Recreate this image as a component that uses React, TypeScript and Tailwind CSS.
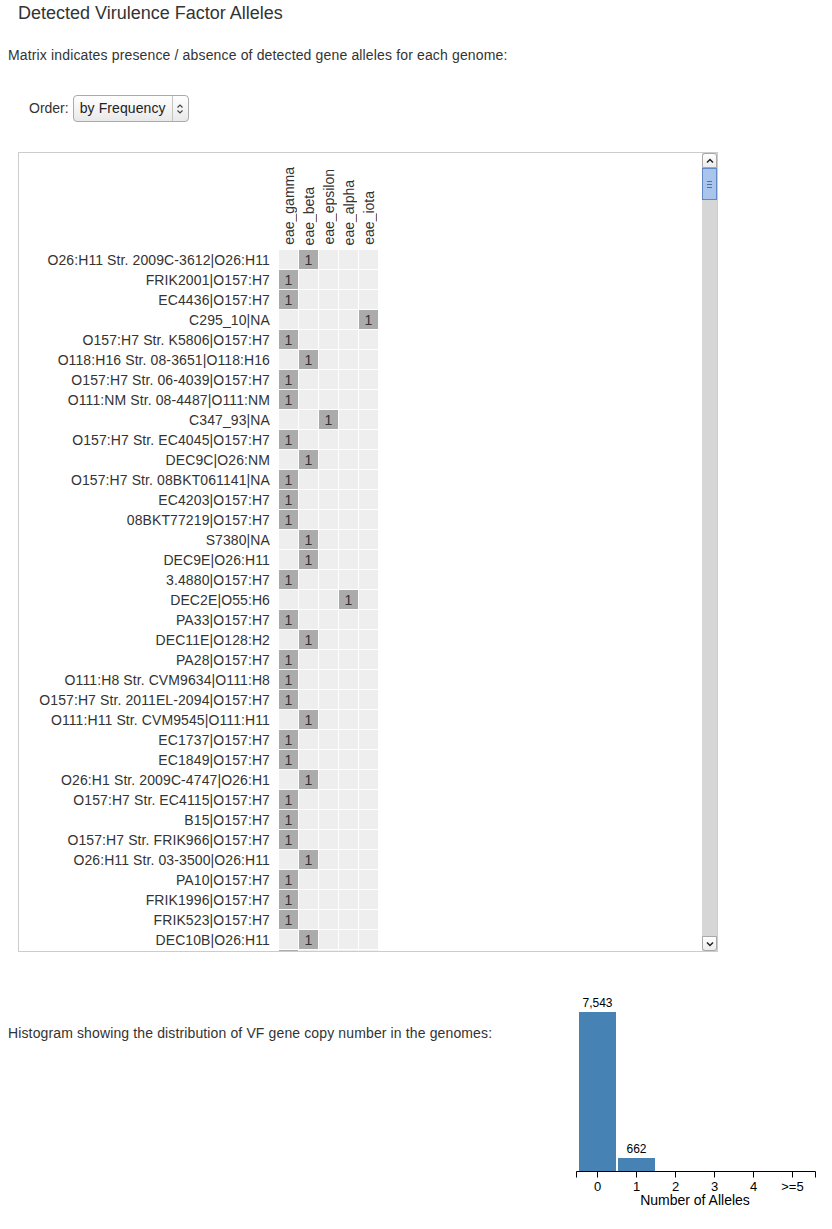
import React from 'react';

const GENES = ['eae_gamma', 'eae_beta', 'eae_epsilon', 'eae_alpha', 'eae_iota'];

// [genome label, index of detected allele]
const ROWS: [string, number][] = [
  ['O26:H11 Str. 2009C-3612|O26:H11', 1],
  ['FRIK2001|O157:H7', 0],
  ['EC4436|O157:H7', 0],
  ['C295_10|NA', 4],
  ['O157:H7 Str. K5806|O157:H7', 0],
  ['O118:H16 Str. 08-3651|O118:H16', 1],
  ['O157:H7 Str. 06-4039|O157:H7', 0],
  ['O111:NM Str. 08-4487|O111:NM', 0],
  ['C347_93|NA', 2],
  ['O157:H7 Str. EC4045|O157:H7', 0],
  ['DEC9C|O26:NM', 1],
  ['O157:H7 Str. 08BKT061141|NA', 0],
  ['EC4203|O157:H7', 0],
  ['08BKT77219|O157:H7', 0],
  ['S7380|NA', 1],
  ['DEC9E|O26:H11', 1],
  ['3.4880|O157:H7', 0],
  ['DEC2E|O55:H6', 3],
  ['PA33|O157:H7', 0],
  ['DEC11E|O128:H2', 1],
  ['PA28|O157:H7', 0],
  ['O111:H8 Str. CVM9634|O111:H8', 0],
  ['O157:H7 Str. 2011EL-2094|O157:H7', 0],
  ['O111:H11 Str. CVM9545|O111:H11', 1],
  ['EC1737|O157:H7', 0],
  ['EC1849|O157:H7', 0],
  ['O26:H1 Str. 2009C-4747|O26:H1', 1],
  ['O157:H7 Str. EC4115|O157:H7', 0],
  ['B15|O157:H7', 0],
  ['O157:H7 Str. FRIK966|O157:H7', 0],
  ['O26:H11 Str. 03-3500|O26:H11', 1],
  ['PA10|O157:H7', 0],
  ['FRIK1996|O157:H7', 0],
  ['FRIK523|O157:H7', 0],
  ['DEC10B|O26:H11', 1],
];

function OrderSelect() {
  return (
    <div className="flex items-center gap-[4px] pl-[29px]">
      <span>Order:</span>
      <div className="flex h-[27px] w-[116px] items-center rounded-[4px] border border-[#aaaaaa] bg-gradient-to-b from-white to-[#e9e9e9]">
        <span className="flex-1 pl-[6px] tracking-[0.1px] text-[#222]">by Frequency</span>
        <div className="flex h-full w-[16px] items-center justify-center border-l border-[#c4c4c4]">
          <svg width="8" height="12" viewBox="0 0 8 12" fill="none" stroke="#444" strokeWidth="1.2">
            <path d="M1.5 4.5 L4 2 L6.5 4.5" />
            <path d="M1.5 7.5 L4 10 L6.5 7.5" />
          </svg>
        </div>
      </div>
    </div>
  );
}

function Scrollbar() {
  return (
    <div className="flex w-[15px] shrink-0 flex-col bg-[#d6d6d6]">
      <div className="flex h-[15px] items-center justify-center rounded-t-[3px] border border-[#a8a8a8] bg-gradient-to-b from-white to-[#ececec]">
        <svg width="8" height="6" viewBox="0 0 8 6" fill="none" stroke="#222" strokeWidth="1.5">
          <path d="M1 4.5 L4 1.5 L7 4.5" />
        </svg>
      </div>
      <div className="flex h-[32px] flex-col items-center justify-center gap-[2px] border border-[#6188c4] bg-[#a9c5ec]">
        <div className="h-px w-[5px] bg-[#4f72a8]" />
        <div className="h-px w-[5px] bg-[#4f72a8]" />
        <div className="h-px w-[5px] bg-[#4f72a8]" />
      </div>
      <div className="flex-1" />
      <div className="flex h-[15px] items-center justify-center rounded-b-[3px] border border-[#a8a8a8] bg-gradient-to-b from-white to-[#ececec]">
        <svg width="8" height="6" viewBox="0 0 8 6" fill="none" stroke="#222" strokeWidth="1.5">
          <path d="M1 1.5 L4 4.5 L7 1.5" />
        </svg>
      </div>
    </div>
  );
}

function Matrix() {
  return (
    <div className="ml-[18px] flex h-[800px] w-[700px] border border-[#cccccc] bg-white">
      <div className="flex-1 overflow-hidden">
        <div className="flex h-[97px]">
          <div className="w-[260px] shrink-0" />
          {GENES.map((g) => (
            <div key={g} className="flex w-[20px] items-end pb-[5px]">
              <span className="rotate-180 leading-[20px] [writing-mode:vertical-rl]">{g}</span>
            </div>
          ))}
        </div>
        {ROWS.map(([label, hit], i) => (
          <div key={i} className="flex h-[20px]">
            <div className="w-[260px] shrink-0 pr-[9px] text-right leading-[20px] tracking-[0.1px] whitespace-nowrap">
              {label}
            </div>
            {GENES.map((g, j) => (
              <div
                key={g}
                className={
                  j === hit
                    ? 'mr-px mb-px flex h-[19px] w-[19px] items-center justify-center bg-[#ababab] leading-none'
                    : 'mr-px mb-px h-[19px] w-[19px] bg-[#eeeeee]'
                }
              >
                {j === hit ? '1' : null}
              </div>
            ))}
          </div>
        ))}
        {/* next row, only its top edge shows above the fold */}
        <div className="flex h-[20px]">
          <div className="w-[260px] shrink-0" />
          <div className="mr-px h-[19px] w-[19px] bg-[#ababab]" />
          <div className="mr-px h-[19px] w-[19px] bg-[#eeeeee]" />
          <div className="mr-px h-[19px] w-[19px] bg-[#eeeeee]" />
          <div className="mr-px h-[19px] w-[19px] bg-[#eeeeee]" />
          <div className="mr-px h-[19px] w-[19px] bg-[#eeeeee]" />
        </div>
      </div>
      <Scrollbar />
    </div>
  );
}

function Histogram() {
  const ticks = ['0', '1', '2', '3', '4', '>=5'];
  return (
    <svg width="272" height="225" viewBox="0 0 272 225" className="shrink-0" fontFamily="'Liberation Sans', Arial, sans-serif">
      <rect x="19" y="22" width="37" height="160" fill="#4682b4" />
      <rect x="58" y="168" width="37" height="14" fill="#4682b4" />
      <text x="37.5" y="17" fontSize="12" textAnchor="middle" fill="#000">7,543</text>
      <text x="76.5" y="163" fontSize="12" textAnchor="middle" fill="#000">662</text>
      <path d="M16.5,187.5V181.5H255.5V187.5" fill="none" stroke="#000" strokeWidth="1" />
      {ticks.map((t, i) => {
        const x = 37.5 + i * 39;
        return (
          <g key={t}>
            <line x1={x} y1="181.5" x2={x} y2="187.5" stroke="#000" />
            <text x={x} y="201" fontSize="13" textAnchor="middle" fill="#000">{t}</text>
          </g>
        );
      })}
      <text x="135" y="215" fontSize="14" textAnchor="middle" fill="#000">Number of Alleles</text>
    </svg>
  );
}

export default function App() {
  return (
    <div className="w-[832px] bg-white pb-[14px] text-[14px] text-[#333333] [font-family:'Liberation_Sans',Arial,sans-serif]">
      <h4 className="pt-[3px] pl-[18px] text-[18px] leading-[20px]">Detected Virulence Factor Alleles</h4>
      <p className="mt-[22px] pl-[8px] leading-[20px] tracking-[0.15px]">
        Matrix indicates presence / absence of detected gene alleles for each genome:
      </p>
      <div className="mt-[30px] mb-[30px]">
        <OrderSelect />
      </div>
      <Matrix />
      <div className="mt-[38px] flex">
        <p className="flex-1 pt-[33px] pl-[8px] leading-[20px] tracking-[0.13px]">
          Histogram showing the distribution of VF gene copy number in the genomes:
        </p>
        <Histogram />
      </div>
    </div>
  );
}
